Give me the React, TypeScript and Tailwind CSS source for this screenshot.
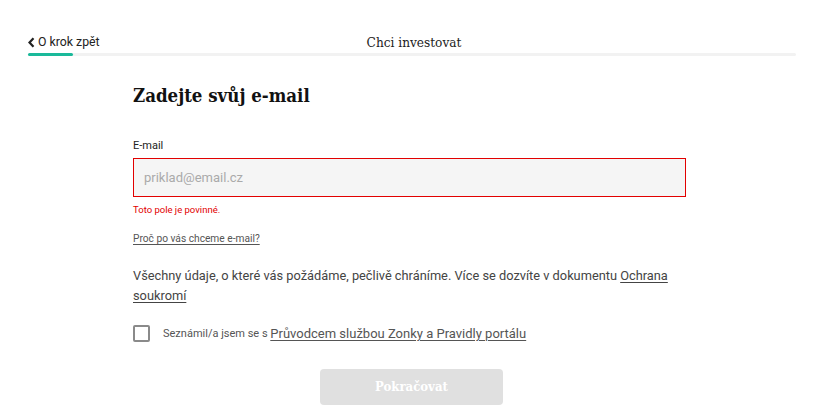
import React from "react";

export default function App() {
  const slab = { fontFamily: '"DejaVu Serif Condensed", "DejaVu Serif", "Liberation Serif", serif' };
  return (
    <div className="w-[828px] h-[417px] bg-white overflow-hidden font-['Roboto',sans-serif] text-[#222]">
      <header className="px-[28px] pt-[33px]">
        <div className="relative flex items-center h-[18px]">
          <a className="flex items-center gap-[3px] text-[12.3px] text-[#222]">
            <svg width="7" height="11" viewBox="0 0 7 11" className="mt-[1px]">
              <path d="M5.5 1.2 L1.5 5.5 L5.5 9.8" stroke="#222" strokeWidth="2.2" fill="none" />
            </svg>
            O krok zpět
          </a>
          <div className="absolute left-0 right-0 text-center text-[13.5px] text-[#222] pointer-events-none" style={slab}>
            Chci investovat
          </div>
        </div>
        <div className="mt-[2px] h-[3px] w-[768px] bg-[#f2f2f2] rounded-full">
          <div className="h-[3px] w-[45px] bg-[#1ab99a] rounded-full" />
        </div>
      </header>

      <main className="w-[553px] ml-[133px] pt-[28px]">
        <h1 className="text-[18.5px] font-bold text-[#111] leading-[24px]" style={slab}>
          Zadejte svůj e-mail
        </h1>

        <label className="block mt-[31px] text-[11px] text-[#222] leading-[14px]">E-mail</label>
        <div className="mt-[5px] h-[39px] border border-[#e20000] bg-[#f5f5f5] flex items-center px-[10px] text-[13px] text-[#aaa]">
          priklad@email.cz
        </div>
        <p className="mt-[7px] text-[9.5px] text-[#e20000] leading-[12px]">Toto pole je povinné.</p>

        <a className="inline-block mt-[16px] text-[10.2px] text-[#555] underline underline-offset-2 leading-[14px]">
          Proč po vás chceme e-mail?
        </a>

        <p className="mt-[17px] text-[12.8px] text-[#444] leading-[20px]">
          Všechny údaje, o které vás požádáme, pečlivě chráníme. Více se dozvíte v dokumentu{" "}
          <span className="underline underline-offset-2">Ochrana soukromí</span>
        </p>

        <div className="mt-[18px] flex items-center">
          <div className="w-[17px] h-[17px] border-2 border-[#8a8a8a] rounded-[2px]" />
          <span className="ml-[13px] text-[11px] text-[#555]">Seznámil/a jsem se s&nbsp;</span>
          <span className="text-[13px] text-[#555] underline underline-offset-2">
            Průvodcem službou Zonky a Pravidly portálu
          </span>
        </div>

        <div className="mt-[25px] flex justify-center pl-[4px]">
          <button
            className="w-[183px] h-[36px] rounded-[4px] bg-[#e0e0e0] text-white text-[13px] font-bold"
            style={slab}
          >
            Pokračovat
          </button>
        </div>
      </main>
    </div>
  );
}
